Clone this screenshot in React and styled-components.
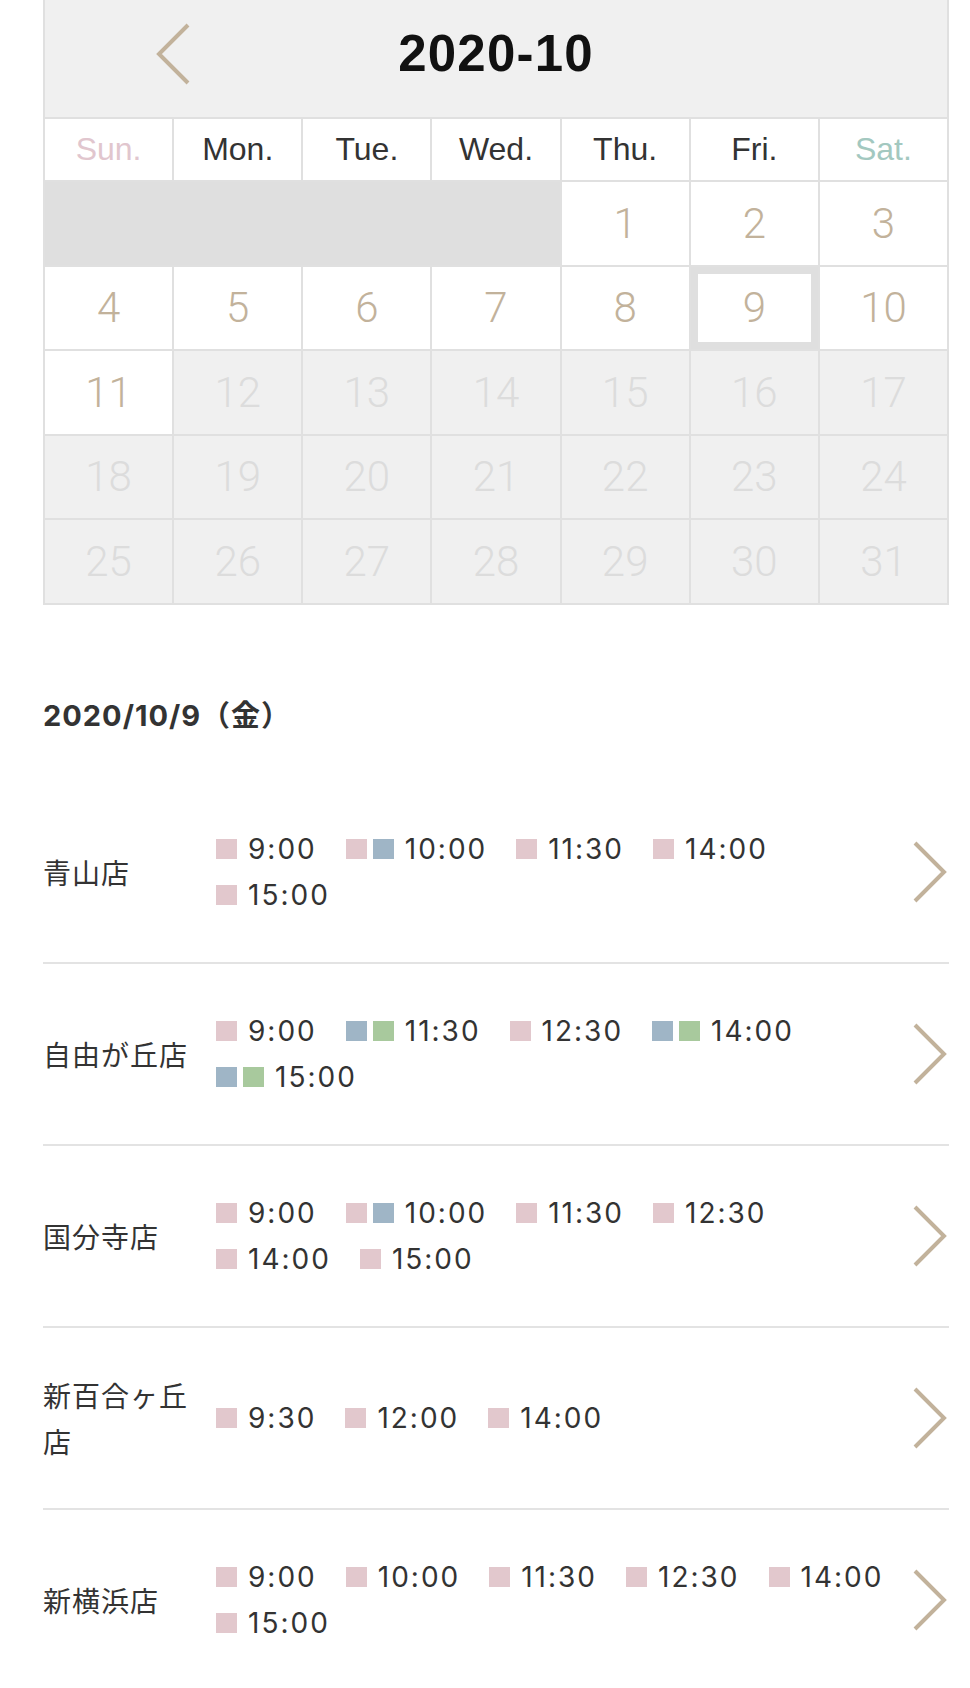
import React from 'react'
import styled, { createGlobalStyle, css } from 'styled-components'

const GlobalStyle = createGlobalStyle`
  body {
    margin: 0;
    background: #ffffff;
    font-family: "Liberation Sans", "Noto Sans CJK JP", sans-serif;
  }
`

const TAN = '#c2b29b'
const LINE = '#e0e0e0'

const Page = styled.div`
  padding: 0 21px 0 43px;
`

const Calendar = styled.div`
  border: 2px solid ${LINE};
  border-top: none;
`

const CalHeader = styled.div`
  height: 119px;
  box-sizing: border-box;
  padding-bottom: 10px;
  background: #f0f0f0;
  border-bottom: 2px solid ${LINE};
  display: grid;
  grid-template-columns: 1fr auto 1fr;
  align-items: center;
`

const PrevButton = styled.button`
  justify-self: start;
  margin-left: 111px;
  padding: 0;
  border: none;
  background: none;
  display: flex;
`

const MonthTitle = styled.h1`
  margin: 0;
  font-family: "Liberation Sans", sans-serif;
  font-weight: 700;
  font-size: 51px;
  letter-spacing: 1.2px;
  color: #111111;
`

const DayGrid = styled.div`
  display: grid;
  grid-template-columns: repeat(7, 1fr);
  grid-template-rows: 61px repeat(5, 82.5px);
  gap: 2px;
  background: ${LINE};
`

const weekColors = { sun: '#e1c6ce', sat: '#a3c8c0', day: '#333333' }

const WeekLabel = styled.div`
  background: #ffffff;
  display: flex;
  align-items: center;
  justify-content: center;
  font-family: "Liberation Sans", sans-serif;
  font-size: 32px;
  color: ${({ $kind }) => weekColors[$kind]};
`

const EmptyBlock = styled.div`
  grid-column: span 4;
  background: #dfdfdf;
`

const DayCell = styled.div`
  display: flex;
  align-items: center;
  justify-content: center;
  font-family: "Roboto", "Liberation Sans", sans-serif;
  font-weight: 300;
  font-size: 42px;
  background: ${({ $open }) => ($open ? '#ffffff' : '#f0f0f0')};
  color: ${({ $open }) => ($open ? TAN : '#dcdcdc')};
  ${({ $selected }) =>
    $selected &&
    css`
      box-shadow: inset 0 0 0 7px #dfdfdf;
    `}
`

const DateHeading = styled.h2`
  margin: 91px 0 46px;
  font-family: "Inter", "Noto Sans CJK JP", sans-serif;
  font-weight: 700;
  font-size: 29px;
  line-height: 40px;
  letter-spacing: 1px;
  color: #333333;
`

const ShopRow = styled.div`
  display: flex;
  align-items: center;
  padding: 44px 0;
  border-bottom: 2px solid #e3e3e3;
`

const ShopName = styled.div`
  flex: 0 0 160px;
  font-family: "Noto Sans CJK JP", sans-serif;
  font-size: 28px;
  line-height: 46px;
  letter-spacing: 1px;
  color: #333333;
`

const Slots = styled.div`
  flex: 0 0 676px;
  margin-left: 13px;
  display: flex;
  flex-wrap: wrap;
  column-gap: 29px;
`

const Slot = styled.div`
  display: flex;
  align-items: center;
  height: 46px;
`

const swatch = { p: '#e2c8cd', b: '#9fb5c6', g: '#a8c99d' }

const Swatch = styled.span`
  width: 21px;
  height: 20px;
  margin-right: 6px;
  background: ${({ $c }) => swatch[$c]};
`

const Time = styled.span`
  margin-left: 5px;
  font-family: "Inter", "Liberation Sans", sans-serif;
  font-size: 28px;
  letter-spacing: 2px;
  color: #333333;
`

const NextCell = styled.div`
  flex: 1;
  display: flex;
  justify-content: flex-end;
  padding-right: 2px;
`

const Chevron = ({ dir }) => (
  <svg width="35" height="62" viewBox="0 0 35 62" fill="none">
    <polyline
      points={dir === 'left' ? '32,2 3,31 32,60' : '3,2 32,31 3,60'}
      stroke={TAN}
      strokeWidth="4"
    />
  </svg>
)

const weekdays = [
  ['Sun.', 'sun'],
  ['Mon.', 'day'],
  ['Tue.', 'day'],
  ['Wed.', 'day'],
  ['Thu.', 'day'],
  ['Fri.', 'day'],
  ['Sat.', 'sat'],
]

const days = Array.from({ length: 31 }, (_, i) => i + 1)

const shops = [
  {
    name: '青山店',
    slots: [['p', '9:00'], ['pb', '10:00'], ['p', '11:30'], ['p', '14:00'], ['p', '15:00']],
  },
  {
    name: '自由が丘店',
    slots: [['p', '9:00'], ['bg', '11:30'], ['p', '12:30'], ['bg', '14:00'], ['bg', '15:00']],
  },
  {
    name: '国分寺店',
    slots: [['p', '9:00'], ['pb', '10:00'], ['p', '11:30'], ['p', '12:30'], ['p', '14:00'], ['p', '15:00']],
  },
  {
    name: '新百合ヶ丘店',
    slots: [['p', '9:30'], ['p', '12:00'], ['p', '14:00']],
  },
  {
    name: '新横浜店',
    slots: [['p', '9:00'], ['p', '10:00'], ['p', '11:30'], ['p', '12:30'], ['p', '14:00'], ['p', '15:00']],
  },
]

const App = () => {
  return (
    <Page>
      <GlobalStyle />
      <Calendar>
        <CalHeader>
          <PrevButton aria-label="前の月">
            <Chevron dir="left" />
          </PrevButton>
          <MonthTitle>2020-10</MonthTitle>
          <span />
        </CalHeader>
        <DayGrid>
          {weekdays.map(([label, kind]) => (
            <WeekLabel key={label} $kind={kind}>{label}</WeekLabel>
          ))}
          <EmptyBlock />
          {days.map((d) => (
            <DayCell key={d} $open={d <= 11} $selected={d === 9}>
              {d}
            </DayCell>
          ))}
        </DayGrid>
      </Calendar>

      <DateHeading>2020/10/9（金）</DateHeading>

      {shops.map((shop) => (
        <ShopRow key={shop.name}>
          <ShopName>{shop.name}</ShopName>
          <Slots>
            {shop.slots.map(([colors, time]) => (
              <Slot key={time}>
                {colors.split('').map((c, i) => (
                  <Swatch key={i} $c={c} />
                ))}
                <Time>{time}</Time>
              </Slot>
            ))}
          </Slots>
          <NextCell>
            <Chevron dir="right" />
          </NextCell>
        </ShopRow>
      ))}
    </Page>
  )
}

export default App
